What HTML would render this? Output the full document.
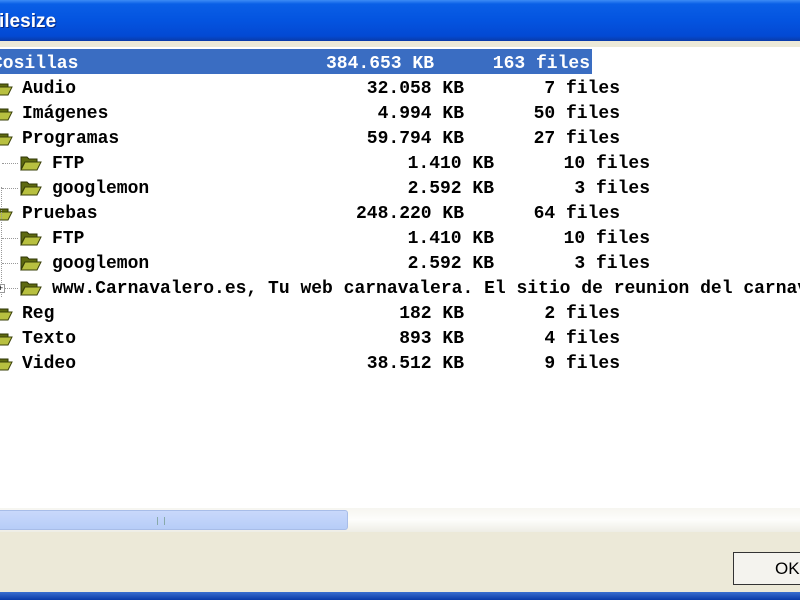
<!DOCTYPE html>
<html><head><meta charset="utf-8"><style>
*{margin:0;padding:0;box-sizing:border-box}
body{width:800px;height:600px;overflow:hidden;position:relative;background:#ece9d8;font-family:"Liberation Mono",monospace;}
#title{position:absolute;left:0;top:0;width:800px;height:41px;background:linear-gradient(#3d8bf5 0,#0a5fe6 4px,#0454e0 20px,#0349d3 36px,#0a3aa8 41px);}
#title span{position:absolute;left:-1px;top:11px;color:#fff;font:bold 19px "Liberation Sans",sans-serif;text-shadow:1px 1px #0a2a80}
#tree{position:absolute;left:0;top:47px;width:800px;height:461px;background:#fff;overflow:hidden}
.r{position:absolute;height:25px;width:1200px;font-weight:bold;font-size:18px;line-height:25px;color:#000;white-space:pre}
.r span{position:absolute;top:3px}
.sel{position:absolute;left:0;top:2px;width:592px;height:25px;background:#3a6dc2}
.f{position:absolute;width:22px;height:16px}
.dl{position:absolute;border-top:1px dotted #999;height:0}
#sb{position:absolute;left:0;top:508px;width:800px;height:24px;background:linear-gradient(#f6f5f0,#fdfdfb 50%,#eeede5)}
#th{position:absolute;left:-4px;top:2px;width:352px;height:20px;border:1px solid #a8bde8;border-radius:3px;background:linear-gradient(#c9d8fb,#b7cdf8)}
#th i{position:absolute;left:160px;top:6px;width:8px;height:8px;border-left:1px solid #8aa;border-right:1px solid #8aa}
#ok{position:absolute;left:733px;top:552px;width:80px;height:33px;border:1px solid #333;border-right:none;background:#f4f3ee;font:17px "Liberation Sans",sans-serif;line-height:31px;padding-left:41px}
#bot{position:absolute;left:0;top:592px;width:800px;height:8px;background:linear-gradient(#3a6fd0,#0a3aa8)}
</style></head><body>
<div id="title"><span>ilesize</span></div>
<div id="tree">
<div class="sel"></div>
</div>
<div id="sb"><div id="th"><i></i></div></div>
<div id="ok">OK</div>
<div id="bot"></div>
<script>
var rows=[
[0,"Cosillas","384.653 KB","163 files"],
[1,"Audio","32.058 KB","7 files"],
[1,"Imágenes","4.994 KB","50 files"],
[1,"Programas","59.794 KB","27 files"],
[2,"FTP","1.410 KB","10 files"],
[2,"googlemon","2.592 KB","3 files"],
[1,"Pruebas","248.220 KB","64 files"],
[2,"FTP","1.410 KB","10 files"],
[2,"googlemon","2.592 KB","3 files"],
[2,"www.Carnavalero.es, Tu web carnavalera. El sitio de reunion del carnaval","",""],
[1,"Reg","182 KB","2 files"],
[1,"Texto","893 KB","4 files"],
[1,"Video","38.512 KB","9 files"]];
var t=document.getElementById('tree'),h='';
var fold='<svg class="f" viewBox="0 0 22 16"><path d="M1 2h6l2 2h8v3H5L1 14z" fill="#5e6a10" stroke="#2e3405" stroke-width="1"/><path d="M5 7h16l-4 8H1z" fill="#b8c040" stroke="#3a4008" stroke-width="1"/></svg>';
rows.forEach(function(r,i){
 var top=2+25*i,o=r[0]*30-8,c=i==0?'#fff':'#000';
 h+='<div class="r" style="left:0;top:'+top+'px;color:'+c+'">';
 h+='<span style="left:'+o+'px">'+r[1]+'</span>';
 if(r[2]){h+='<span style="left:'+(o+442-r[2].length*10.8)+'px">'+r[2]+'</span>';
 h+='<span style="left:'+(o+598-r[3].length*10.8)+'px">'+r[3]+'</span>';}
 h+='</div>';
 if(i>0){var fx=r[0]==1?-9:20;h+='<div style="position:absolute;left:'+fx+'px;top:'+(top+6)+'px">'+fold.replace('class="f"','class="f" style="position:static"')+'</div>';
 if(r[0]==2)h+='<div class="dl" style="left:2px;width:16px;top:'+(top+14)+'px"></div>';}
});
h+='<div style="position:absolute;left:1px;top:140px;height:110px;border-left:1px dotted #999"></div>';
h+='<div style="position:absolute;left:-4px;top:237px;width:9px;height:9px;border:1px solid #999;background:#fff;font:9px sans-serif;line-height:7px;text-align:center">+</div>';
t.innerHTML+=h;
</script>
</body></html>
